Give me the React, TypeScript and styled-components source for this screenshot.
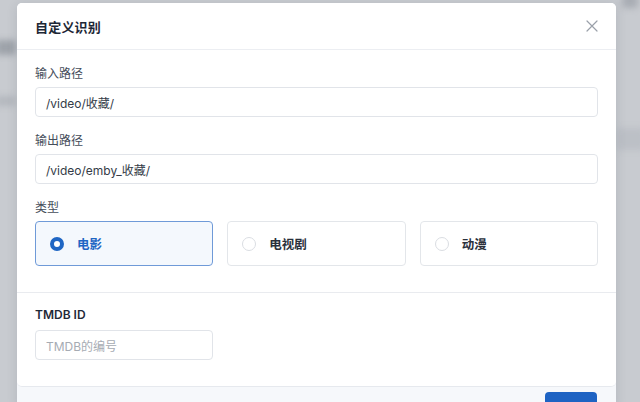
import React from 'react';
import styled, { createGlobalStyle } from 'styled-components';

const GlobalStyle = createGlobalStyle`
  html, body {
    margin: 0;
    padding: 0;
    width: 640px;
    height: 402px;
    overflow: hidden;
    background: #c7cacf;
    font-family: Inter, "Noto Sans CJK SC", sans-serif;
  }
  * { box-sizing: border-box; }
`;

const Backdrop = styled.div`
  position: relative;
  width: 640px;
  height: 402px;
  overflow: hidden;
  background: #c8cbd0;
`;

// blurred shapes of the page behind the overlay
const Ghost = styled.div<{ $x: number; $y: number; $w: number; $h: number; $c: string }>`
  position: absolute;
  left: ${p => p.$x}px;
  top: ${p => p.$y}px;
  width: ${p => p.$w}px;
  height: ${p => p.$h}px;
  background: ${p => p.$c};
  filter: blur(3px);
  border-radius: 3px;
`;

const Layer = styled.div`
  position: absolute;
  inset: 0;
  padding: 3px 24px 0 17px;
`;

const Modal = styled.div`
  width: 599px;
  background: #f6f8fb;
  border-radius: 5px 5px 0 0;
  box-shadow: 0 2px 12px rgba(30, 40, 60, 0.12);
  overflow: hidden;
`;

const Card = styled.div`
  background: #ffffff;
  border-radius: 0 0 5px 5px;
  border-bottom: 1px solid #e6e9ee;
`;

const Header = styled.div`
  height: 47px;
  display: flex;
  align-items: center;
  justify-content: space-between;
  padding: 0 16px 0 18px;
  border-bottom: 1px solid #eceef2;
`;

const Title = styled.h3`
  margin: 0;
  font-size: 13px;
  font-weight: 700;
  color: #1d2736;
  letter-spacing: 0.2px;
`;

const Close = styled.button`
  width: 16px;
  height: 16px;
  padding: 0;
  border: 0;
  background: none;
  display: flex;
  align-items: center;
  justify-content: center;
`;

const Section = styled.div<{ $top: number }>`
  padding: ${p => p.$top}px 18px 26px;
  & + & {
    border-top: 1px solid #e9ebef;
  }
`;

const Field = styled.div`
  margin-bottom: 15px;
  &:last-child {
    margin-bottom: 0;
  }
`;

const Label = styled.div<{ $strong?: boolean }>`
  font-size: 12px;
  line-height: 18px;
  margin-bottom: ${p => (p.$strong ? 6 : 4)}px;
  color: ${p => (p.$strong ? '#1f2937' : '#454d5a')};
  font-weight: ${p => (p.$strong ? 600 : 400)};
`;

const Input = styled.div<{ $w?: number; $placeholder?: boolean }>`
  width: ${p => (p.$w ? `${p.$w}px` : '100%')};
  height: 30px;
  border: 1px solid #e1e4e9;
  border-radius: 4px;
  background: #fff;
  padding: 0 10px;
  display: flex;
  align-items: center;
  font-size: 12px;
  color: ${p => (p.$placeholder ? '#a6abb3' : '#343b47')};
`;

const Options = styled.div`
  display: grid;
  grid-template-columns: repeat(3, 1fr);
  gap: 14px;
`;

const Option = styled.div<{ $active?: boolean }>`
  height: 45px;
  display: flex;
  align-items: center;
  gap: 13px;
  padding: 0 14px;
  border-radius: 4px;
  border: 1px solid ${p => (p.$active ? '#6f9ad8' : '#e3e6ea')};
  background: ${p => (p.$active ? '#f4f8fd' : '#fff')};
  font-size: 12.5px;
  font-weight: 700;
  color: ${p => (p.$active ? '#1f66c4' : '#2a303b')};
`;

const Radio = styled.span<{ $active?: boolean }>`
  width: 14px;
  height: 14px;
  border-radius: 50%;
  flex: none;
  background: #fff;
  border: ${p => (p.$active ? '4.5px solid #1f66c4' : '1px solid #dadde2')};
`;

const Footer = styled.div`
  height: 20px;
  display: flex;
  justify-content: flex-end;
  padding: 5px 19px 0 0;
`;

const Primary = styled.button`
  width: 52px;
  height: 30px;
  border: 0;
  border-radius: 4px;
  background: #1e63c3;
`;

const types = [
  { name: '电影', active: true },
  { name: '电视剧', active: false },
  { name: '动漫', active: false },
];

const App: React.FC = () => {
  return (
    <Backdrop>
      <GlobalStyle />
      <Ghost $x={-4} $y={40} $w={20} $h={15} $c="#9ea3aa" />
      <Ghost $x={-4} $y={96} $w={20} $h={10} $c="#b4b8be" />
      <Ghost $x={622} $y={-6} $w={16} $h={14} $c="#a9adb4" />
      <Ghost $x={616} $y={128} $w={30} $h={22} $c="#bcc0c6" />
      <Layer>
        <Modal>
          <Card>
            <Header>
              <Title>自定义识别</Title>
              <Close aria-label="close">
                <svg width="12" height="12" viewBox="0 0 12 12">
                  <path d="M1 1L11 11M11 1L1 11" stroke="#9aa0a9" strokeWidth="1.2" strokeLinecap="round" />
                </svg>
              </Close>
            </Header>
            <Section $top={15}>
              <Field>
                <Label>输入路径</Label>
                <Input>/video/收藏/</Input>
              </Field>
              <Field>
                <Label>输出路径</Label>
                <Input>/video/emby_收藏/</Input>
              </Field>
              <Field>
                <Label>类型</Label>
                <Options>
                  {types.map(t => (
                    <Option key={t.name} $active={t.active}>
                      <Radio $active={t.active} />
                      {t.name}
                    </Option>
                  ))}
                </Options>
              </Field>
            </Section>
            <Section $top={13}>
              <Field>
                <Label $strong>TMDB ID</Label>
                <Input $w={178} $placeholder>TMDB的编号</Input>
              </Field>
            </Section>
          </Card>
          <Footer>
            <Primary />
          </Footer>
        </Modal>
      </Layer>
    </Backdrop>
  );
};

export default App;
